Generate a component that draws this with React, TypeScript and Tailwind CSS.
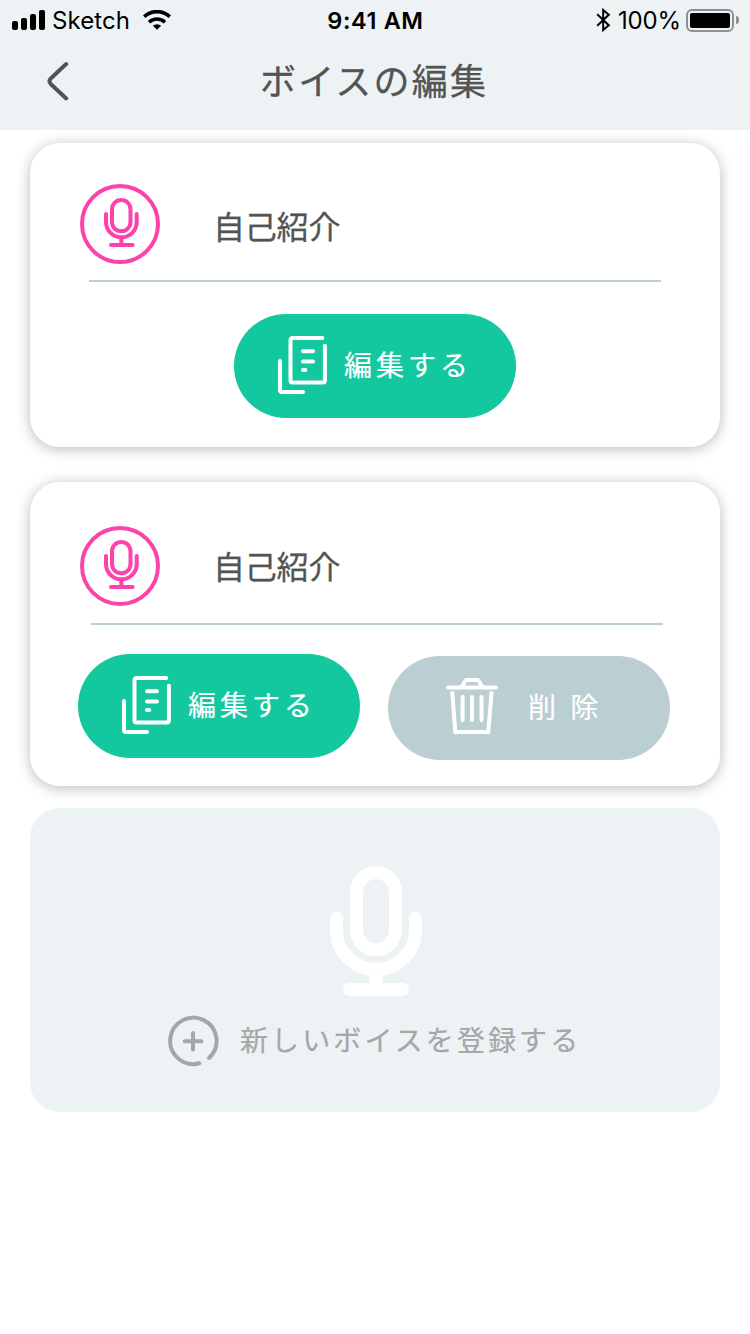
import React from 'react';

const SmallMic = () => (
  <svg width="35" height="49" viewBox="0 0 35 49" fill="none" stroke="currentColor" strokeWidth="4" strokeLinecap="round">
    <rect x="8" y="2" width="18.5" height="31.3" rx="9.25" />
    <path d="M2 16v8a15.35 15.35 0 0 0 30.7 0v-8M17.35 40v6M7 47h21.7" />
  </svg>
);

const BigMic = () => (
  <svg width="92" height="130" viewBox="0 0 92 130" fill="none" stroke="white" strokeWidth="13" strokeLinecap="round">
    <rect x="26.5" y="6.5" width="39" height="77" rx="19.5" />
    <path d="M6.5 52.5V64a39.5 39.5 0 0 0 79 0V52.5M46 106v14M19.5 123.5h53" />
  </svg>
);

const EditIcon = () => (
  <svg width="49" height="58" viewBox="0 0 49 58" fill="none" stroke="white" strokeWidth="4" strokeLinecap="round">
    <path d="M44.2 2H14.5a2 2 0 0 0-2 2v40.5a2 2 0 0 0 2 2h30.4a2 2 0 0 0 2-2V9.8" />
    <path d="M2 25v29a2 2 0 0 0 2 2h21M25 15.3h10M25 25.5h10M25 34h2.3" />
  </svg>
);

const TrashIcon = () => (
  <svg width="52" height="56" viewBox="0 0 52 56" fill="none" stroke="white" strokeWidth="4" strokeLinecap="round" strokeLinejoin="round">
    <path d="M2 9.6h48M16 8.4L20 2h12l4 6.4M6.3 15L9.3 54H42.3L45.5 15" />
    <path d="M16.6 19v23M26 19v23M35.5 19v23" />
  </svg>
);

const PlusIcon = () => (
  <svg className="overflow-visible" width="50" height="51" viewBox="0 0 50 51" fill="none" stroke="currentColor" strokeWidth="4" strokeLinecap="round">
    <path d="M41 42A23.2 23.2 0 1 0 31.3 47.3M25 17v16.6M16.7 25.2h16.6" />
  </svg>
);

const StatusBar = () => (
  <div className="flex h-10 items-center justify-between pl-3 pr-[11px] font-['Inter',sans-serif] text-2xl text-black">
    <div className="flex w-[200px] items-center">
      <div className="flex h-5 items-end gap-[3px]">
        <span className="h-[9px] w-1.5 rounded-xs bg-black" />
        <span className="h-3 w-1.5 rounded-xs bg-black" />
        <span className="h-4 w-1.5 rounded-xs bg-black" />
        <span className="h-5 w-1.5 rounded-xs bg-black" />
      </div>
      <span className="ml-[7px] mt-0.5 w-[90px] text-[24px] leading-10 tracking-[0.1px]">Sketch</span>
      <svg className="ml-px" width="28" height="20" viewBox="0 0 28 20" fill="none" stroke="black" strokeWidth="3.6">
        <path d="M1.2 6.8a18.5 18.5 0 0 1 25.6 0M6 12.2a11.8 11.8 0 0 1 16 0" />
        <path d="M9.8 15.8a6.2 6.2 0 0 1 8.4 0L14 19.8z" fill="black" stroke="none" />
      </svg>
    </div>
    <span className="mt-0.5 text-[23.5px] font-semibold leading-10 tracking-[0.6px]">9:41 AM</span>
    <div className="flex w-[200px] items-center justify-end">
      <svg width="15" height="24" viewBox="0 0 15 24" fill="none" stroke="black" strokeWidth="2">
        <path d="M1.2 6.2l11.6 11L7.2 22V2l5.6 4.8L1.2 17.8" />
      </svg>
      <span className="ml-[7px] mt-0.5 w-[68px] text-[24px] leading-10 tracking-[-0.2px]">100%</span>
      <div className="h-[23px] w-12 rounded-md border-2 border-[#8e9192] p-0.5">
        <div className="h-[15px] w-10 rounded-xs bg-black" />
      </div>
      <span className="ml-0.5 h-2 w-[3px] rounded-r-full bg-[#8e9192]" />
    </div>
  </div>
);

const EditButton = () => (
  <button className="flex h-[104px] w-[282px] shrink-0 rounded-full bg-[#13c79f] pl-11 pt-[22px] text-white">
    <EditIcon />
    <span className="ml-[17px] mt-2 text-[28px] leading-10 tracking-[4px] [-webkit-text-stroke:0.2px]">編集する</span>
  </button>
);

const DeleteButton = () => (
  <button className="mt-0.5 flex h-[104px] w-[282px] shrink-0 rounded-full bg-[#bbced2] pl-[58px] pt-[22px] text-white">
    <TrashIcon />
    <span className="ml-[30px] mt-2 text-[28px] leading-10 tracking-[14.5px] [-webkit-text-stroke:0.2px]">削除</span>
  </button>
);

const MicBadge = () => (
  <div className="flex size-20 justify-center rounded-full border-4 border-[#fb43ab] pl-[3px] pt-2.5 text-[#fb43ab]">
    <SmallMic />
  </div>
);

const cardClass = 'h-[304px] rounded-[30px] bg-white shadow-[0_2px_14px_rgba(0,0,0,0.27)]';

export default function App() {
  return (
    <div lang="ja" className="h-[1334px] w-[750px] overflow-hidden bg-white font-['Noto_Sans_CJK_JP',sans-serif] text-[#545454]">
      <header className="h-[130px] bg-[#edf3f5]">
        <StatusBar />
        <div className="flex pl-[47px] pt-[21px]">
          <svg width="22" height="40" viewBox="0 0 22 40" fill="none" stroke="currentColor" strokeWidth="4" strokeLinecap="round">
            <path d="M19.2 3L4 17.2q-3 3 0 6L19.2 37.5" />
          </svg>
          <h1 className="-mt-2 ml-[191px] text-[36px] font-normal leading-[52px] tracking-[2.2px] [-webkit-text-stroke:0.3px]">ボイスの編集</h1>
        </div>
      </header>

      <main className="px-[30px] pt-[13px]">
        <section className={cardClass}>
          <div className="flex pl-[50px] pt-[41px]">
            <MicBadge />
            <h2 className="ml-[53px] mt-[17px] text-[32px] font-normal leading-12 tracking-[-0.2px] [-webkit-text-stroke:0.3px]">自己紹介</h2>
          </div>
          <div className="ml-[59px] mt-4 h-0.5 w-[572px] bg-[#bbced2]" />
          <div className="mt-8 flex justify-center">
            <EditButton />
          </div>
        </section>

        <section className={`mt-[35px] ${cardClass}`}>
          <div className="flex pl-[50px] pt-11">
            <MicBadge />
            <h2 className="ml-[53px] mt-[15px] text-[32px] font-normal leading-12 tracking-[-0.2px] [-webkit-text-stroke:0.3px]">自己紹介</h2>
          </div>
          <div className="ml-[61px] mt-[17px] h-0.5 w-[572px] bg-[#bbced2]" />
          <div className="mt-[29px] flex gap-7 pl-12">
            <EditButton />
            <DeleteButton />
          </div>
        </section>

        <section className="mt-[22px] h-[304px] rounded-[30px] bg-[#edf3f5] pt-[58px] text-[#a6a6a6]">
          <div className="flex pl-[300px]">
            <BigMic />
          </div>
          <div className="mt-5 flex pl-[138px]">
            <PlusIcon />
            <span className="ml-[22px] mt-[3px] text-[28px] leading-10 tracking-[3.1px] [-webkit-text-stroke:0.2px]">新しいボイスを登録する</span>
          </div>
        </section>
      </main>
    </div>
  );
}
